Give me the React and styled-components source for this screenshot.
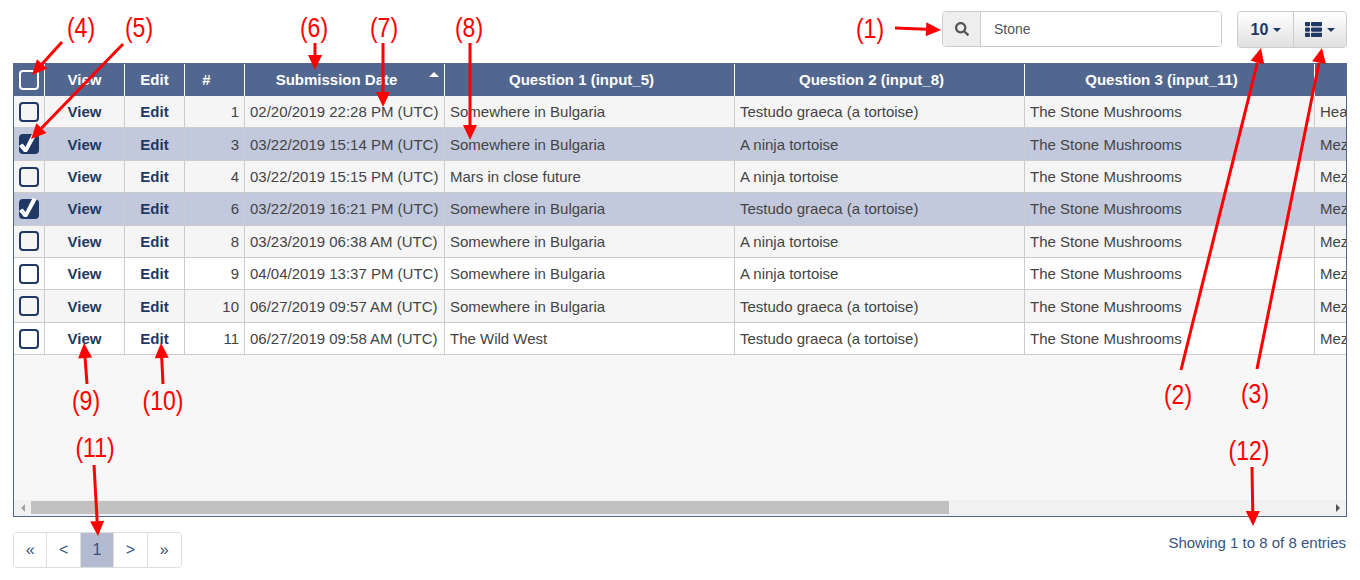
import styled, { createGlobalStyle } from 'styled-components';
import { FaSearch, FaThList } from 'react-icons/fa';

const COLUMNS = '31px 80px 60px 60px 200px 290px 290px 290px 290px';

const rows = [
  { id: 1, date: '02/20/2019 22:28 PM (UTC)', q1: 'Somewhere in Bulgaria', q2: 'Testudo graeca (a tortoise)', q4: 'Heavy' },
  { id: 3, date: '03/22/2019 15:14 PM (UTC)', q1: 'Somewhere in Bulgaria', q2: 'A ninja tortoise', q4: 'Mezzo', checked: true },
  { id: 4, date: '03/22/2019 15:15 PM (UTC)', q1: 'Mars in close future', q2: 'A ninja tortoise', q4: 'Mezzo' },
  { id: 6, date: '03/22/2019 16:21 PM (UTC)', q1: 'Somewhere in Bulgaria', q2: 'Testudo graeca (a tortoise)', q4: 'Mezzo', checked: true },
  { id: 8, date: '03/23/2019 06:38 AM (UTC)', q1: 'Somewhere in Bulgaria', q2: 'A ninja tortoise', q4: 'Mezzo' },
  { id: 9, date: '04/04/2019 13:37 PM (UTC)', q1: 'Somewhere in Bulgaria', q2: 'A ninja tortoise', q4: 'Mezzo' },
  { id: 10, date: '06/27/2019 09:57 AM (UTC)', q1: 'Somewhere in Bulgaria', q2: 'Testudo graeca (a tortoise)', q4: 'Mezzo' },
  { id: 11, date: '06/27/2019 09:58 AM (UTC)', q1: 'The Wild West', q2: 'Testudo graeca (a tortoise)', q4: 'Mezzo' },
];

const labels = [
  { text: '(1)', x: 870, y: 29 },
  { text: '(2)', x: 1178, y: 395 },
  { text: '(3)', x: 1255, y: 394 },
  { text: '(4)', x: 81, y: 28 },
  { text: '(5)', x: 139, y: 28 },
  { text: '(6)', x: 314, y: 28 },
  { text: '(7)', x: 384, y: 28 },
  { text: '(8)', x: 469, y: 28 },
  { text: '(9)', x: 86, y: 401 },
  { text: '(10)', x: 163, y: 401 },
  { text: '(11)', x: 95, y: 448 },
  { text: '(12)', x: 1249, y: 451 },
];

// from -> tip of each callout arrow
const arrows = [
  [895, 28, 941, 30],
  [62, 42, 32, 75],
  [123, 44, 31, 139],
  [315, 43, 315, 70],
  [383, 43, 383, 107],
  [470, 43, 470, 140],
  [1181, 370, 1261, 48],
  [1257, 369, 1322, 48],
  [87, 384, 84, 343],
  [163, 384, 161, 343],
  [94, 465, 98, 536],
  [1252, 467, 1253, 526],
];

function Arrow({ from, to }) {
  const [x1, y1] = from;
  const [x2, y2] = to;
  const len = Math.hypot(x2 - x1, y2 - y1);
  const ux = (x2 - x1) / len;
  const uy = (y2 - y1) / len;
  const bx = x2 - ux * 15;
  const by = y2 - uy * 15;
  const head = `${x2},${y2} ${bx - uy * 7},${by + ux * 7} ${bx + uy * 7},${by - ux * 7}`;
  return (
    <>
      <line x1={x1} y1={y1} x2={bx} y2={by} stroke="#ff0000" strokeWidth="3" />
      <polygon points={head} fill="#ff0000" />
    </>
  );
}

export default function App() {
  return (
    <Page>
      <GlobalStyle />
      <Toolbar>
        <SearchGroup>
          <SearchAddon><FaSearch size={14} /></SearchAddon>
          <SearchInput defaultValue="Stone" />
        </SearchGroup>
        <ButtonGroup>
          <ToolButton>10<Caret /></ToolButton>
          <ToolButton><FaThList size={17} /><Caret /></ToolButton>
        </ButtonGroup>
      </Toolbar>

      <TableFrame>
        <TableClip>
          <HeadRow>
            <HeadCell $box><CheckBox $light /></HeadCell>
            <HeadCell>View</HeadCell>
            <HeadCell>Edit</HeadCell>
            <HeadCell $sortable>#</HeadCell>
            <HeadCell $sortable>Submission Date<SortCaret /></HeadCell>
            <HeadCell $sortable>Question 1 (input_5)</HeadCell>
            <HeadCell $sortable>Question 2 (input_8)</HeadCell>
            <HeadCell $sortable>Question 3 (input_11)</HeadCell>
            <HeadCell $sortable>Question 4 (input_14)</HeadCell>
          </HeadRow>
          {rows.map((row, i) => (
            <BodyRow key={row.id} $checked={row.checked} $odd={i % 2 === 0 || i === 4}>
              <Cell $center>
                <CheckBox $checked={row.checked}>
                  {row.checked && (
                    <CheckMark viewBox="0 0 20 20">
                      <path d="M0 12 L3.5 9.5 L6.5 13 L13.5 -1 L18 0 L8 18 L5 18 Z" fill="#fff" />
                    </CheckMark>
                  )}
                </CheckBox>
              </Cell>
              <ActionCell>View</ActionCell>
              <ActionCell>Edit</ActionCell>
              <Cell $right>{row.id}</Cell>
              <Cell>{row.date}</Cell>
              <Cell>{row.q1}</Cell>
              <Cell>{row.q2}</Cell>
              <Cell>The Stone Mushrooms</Cell>
              <Cell>{row.q4}</Cell>
            </BodyRow>
          ))}
        </TableClip>
        <ScrollBar>
          <ScrollArrow $dir="left" />
          <ScrollTrack><ScrollThumb /></ScrollTrack>
          <ScrollArrow $dir="right" />
        </ScrollBar>
      </TableFrame>

      <Footer>
        <Pagination>
          <PageItem>«</PageItem>
          <PageItem>&lt;</PageItem>
          <PageItem $active>1</PageItem>
          <PageItem>&gt;</PageItem>
          <PageItem>»</PageItem>
        </Pagination>
        <Entries>Showing 1 to 8 of 8 entries</Entries>
      </Footer>

      <ArrowLayer width="1360" height="580">
        {arrows.map(([x1, y1, x2, y2]) => (
          <Arrow key={`${x1}-${y1}`} from={[x1, y1]} to={[x2, y2]} />
        ))}
      </ArrowLayer>
      {labels.map(l => (
        <Callout key={l.text} style={{ left: l.x, top: l.y }}>{l.text}</Callout>
      ))}
    </Page>
  );
}

const GlobalStyle = createGlobalStyle`
  html, body {
    margin: 0;
    background: #fff;
  }
  body {
    font-family: "Liberation Sans", Arial, sans-serif;
    font-size: 15px;
    color: #444;
  }
`;

const Page = styled.div`
  position: relative;
  width: 1360px;
  height: 580px;
  padding: 11px 13px 0;
  box-sizing: border-box;
  overflow: hidden;
`;

const Toolbar = styled.div`
  display: flex;
  justify-content: flex-end;
  align-items: flex-start;
  gap: 15px;
  height: 52px;
`;

const SearchGroup = styled.div`
  display: flex;
  width: 280px;
  height: 36px;
  box-sizing: border-box;
  border: 1px solid #ccc;
  border-radius: 4px;
  overflow: hidden;
`;

const SearchAddon = styled.span`
  display: flex;
  align-items: center;
  justify-content: center;
  width: 38px;
  box-sizing: border-box;
  flex: none;
  background: #eee;
  border-right: 1px solid #ccc;
  color: #555;
`;

const SearchInput = styled.input`
  flex: 1;
  min-width: 0;
  border: 0;
  outline: 0;
  padding: 0 13px;
  font: 14px "Liberation Sans", Arial, sans-serif;
  color: #555;
`;

const ButtonGroup = styled.div`
  display: flex;
  height: 37px;
`;

const ToolButton = styled.button`
  display: flex;
  align-items: center;
  justify-content: center;
  gap: 5px;
  width: 55px;
  padding: 0;
  border: 1px solid #ccc;
  background: linear-gradient(to bottom, #fff 0%, #e0e0e0 100%);
  color: #1f3864;
  font: bold 16px "Liberation Sans", Arial, sans-serif;
  &:first-child {
    width: 57px;
    padding-left: 1px;
    border-radius: 4px 0 0 4px;
  }
  &:last-child {
    margin-left: -1px;
    width: 54px;
    border-radius: 0 4px 4px 0;
  }
`;

const Caret = styled.span`
  width: 0;
  height: 0;
  border-top: 4px solid #1f3864;
  border-left: 4px solid transparent;
  border-right: 4px solid transparent;
`;

const TableFrame = styled.div`
  display: flex;
  flex-direction: column;
  height: 454px;
  box-sizing: border-box;
  border: 1px solid #52678f;
  background: #f7f7f7;
`;

const TableClip = styled.div`
  flex: 1;
  min-height: 0;
  overflow: hidden;
`;

const HeadRow = styled.div`
  display: grid;
  grid-template-columns: ${COLUMNS};
  width: max-content;
  height: 32px;
  background: #52678f;
  color: #fff;
  font-weight: bold;
`;

const HeadCell = styled.div`
  position: relative;
  display: flex;
  align-items: center;
  justify-content: center;
  box-sizing: border-box;
  padding-right: ${p => (p.$sortable ? '16px' : '0')};
  padding-bottom: ${p => (p.$box ? '0' : '2px')};
  border-right: 1px solid #fff;
  font-size: 15px;
  white-space: nowrap;
  &:nth-child(9) {
    border-right: 0;
  }
`;

const SortCaret = styled.span`
  position: absolute;
  top: 8px;
  right: 5px;
  width: 0;
  height: 0;
  border-bottom: 5px solid #fff;
  border-left: 5px solid transparent;
  border-right: 5px solid transparent;
`;

const BodyRow = styled.div`
  display: grid;
  grid-template-columns: ${COLUMNS};
  width: max-content;
  height: 32.42px;
  box-sizing: border-box;
  border-bottom: 1px solid #ccc;
  background: ${p => (p.$checked ? '#c3c9dd' : p.$odd ? '#f5f5f5' : '#fff')};
`;

const Cell = styled.div`
  display: flex;
  align-items: center;
  justify-content: ${p => (p.$center ? 'center' : p.$right ? 'flex-end' : 'flex-start')};
  box-sizing: border-box;
  padding: 0 5px;
  border-right: 1px solid #ccc;
  white-space: nowrap;
  &:nth-child(9) {
    border-right: 0;
  }
`;

const ActionCell = styled(Cell)`
  justify-content: center;
  color: #1f3864;
  font-weight: bold;
`;

const CheckBox = styled.span`
  position: relative;
  display: block;
  width: 20px;
  height: 20px;
  box-sizing: border-box;
  border: 2px solid ${p => (p.$light ? '#fff' : '#1f3864')};
  border-radius: 4px;
  background: ${p => (p.$checked ? '#1f3864' : 'transparent')};
`;

const CheckMark = styled.svg`
  position: absolute;
  left: -2px;
  top: -2px;
  width: 20px;
  height: 20px;
  overflow: visible;
`;

const ScrollBar = styled.div`
  display: flex;
  flex: none;
  height: 16px;
  background: #f1f1f1;
`;

const ScrollArrow = styled.span`
  display: flex;
  align-items: center;
  justify-content: center;
  flex: none;
  width: 17px;
  &::before {
    content: '';
    border-top: 4px solid transparent;
    border-bottom: 4px solid transparent;
    ${p => (p.$dir === 'left' ? 'border-right: 4px solid #a3a3a3;' : 'border-left: 4px solid #505050;')}
  }
`;

const ScrollTrack = styled.div`
  flex: 1;
  padding: 1px 0;
`;

const ScrollThumb = styled.div`
  width: 918px;
  height: 13px;
  background: #c1c1c1;
`;

const Footer = styled.div`
  display: flex;
  justify-content: space-between;
  align-items: flex-start;
  padding-top: 15px;
`;

const Pagination = styled.div`
  display: flex;
  height: 36px;
  box-sizing: border-box;
  border: 1px solid #ddd;
  border-radius: 4px;
  overflow: hidden;
`;

const PageItem = styled.span`
  display: flex;
  align-items: center;
  justify-content: center;
  width: 33.4px;
  box-sizing: border-box;
  border-right: 1px solid #ddd;
  background: ${p => (p.$active ? '#b4bbd0' : '#fff')};
  color: #33557f;
  font-size: 16px;
  &:last-child {
    border-right: 0;
  }
`;

const Entries = styled.div`
  padding: 2px 1px 0 0;
  color: #33557f;
  font-size: 15px;
`;

const ArrowLayer = styled.svg`
  position: absolute;
  left: 0;
  top: 0;
  pointer-events: none;
`;

const Callout = styled.span`
  position: absolute;
  transform: translate(-50%, -50%) scaleX(0.82);
  color: #ff0000;
  font-family: "Liberation Sans", sans-serif;
  font-size: 28px;
  line-height: 1;
  white-space: nowrap;
`;
